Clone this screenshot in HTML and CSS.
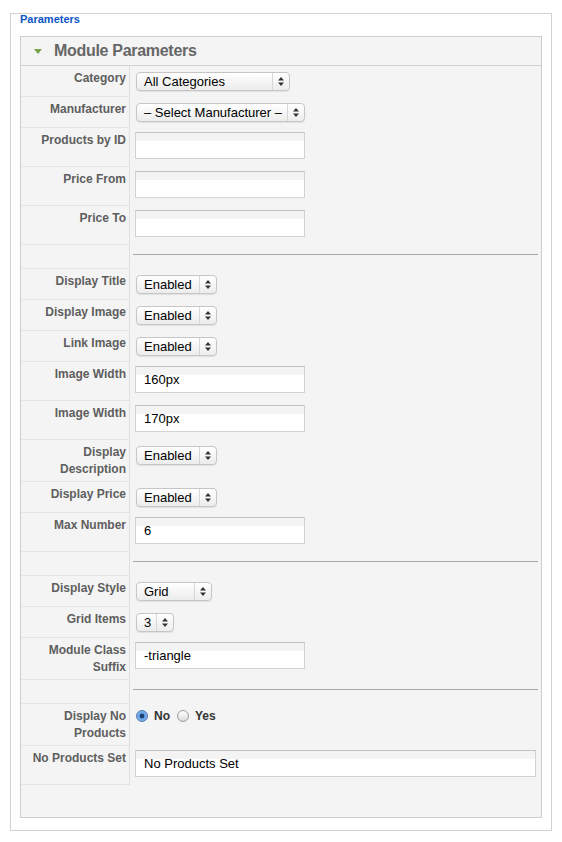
FILE: index.html
```html
<!DOCTYPE html>
<html lang="en">
<head>
    <meta charset="UTF-8">
    <meta name="viewport" content="width=device-width, initial-scale=1.0">
    <title>Module Parameters</title>
    <link rel="stylesheet" href="styles.css">
</head>
<body>
    <div class="page">
        <div class="params">
            <div class="params-title">Parameters</div>
            <div class="panel">
                <h3 class="panel-head"><span class="toggle"></span>Module Parameters</h3>
                <table class="paramlist">
                    <tr>
                        <td class="key">Category</td>
                        <td class="val">
                            <span class="select sel-cat"><span class="sel-val">All Categories</span><span class="sel-arrow"><svg width="6" height="9" viewBox="0 0 6 9"><path d="M3 0 L6 3.5 H0 Z M3 9 L0 5.5 H6 Z" fill="#333"/></svg></span></span>
                        </td>
                    </tr>
                    <tr>
                        <td class="key">Manufacturer</td>
                        <td class="val">
                            <span class="select sel-man"><span class="sel-val">– Select Manufacturer –</span><span class="sel-arrow"><svg width="6" height="9" viewBox="0 0 6 9"><path d="M3 0 L6 3.5 H0 Z M3 9 L0 5.5 H6 Z" fill="#333"/></svg></span></span>
                        </td>
                    </tr>
                    <tr>
                        <td class="key">Products by ID</td>
                        <td class="val"><input type="text" class="text" value=""></td>
                    </tr>
                    <tr>
                        <td class="key">Price From</td>
                        <td class="val"><input type="text" class="text" value=""></td>
                    </tr>
                    <tr>
                        <td class="key">Price To</td>
                        <td class="val"><input type="text" class="text" value=""></td>
                    </tr>
                    <tr class="sep">
                        <td class="key"></td>
                        <td class="val"><hr></td>
                    </tr>
                    <tr>
                        <td class="key">Display Title</td>
                        <td class="val">
                            <span class="select sel-en"><span class="sel-val">Enabled</span><span class="sel-arrow"><svg width="6" height="9" viewBox="0 0 6 9"><path d="M3 0 L6 3.5 H0 Z M3 9 L0 5.5 H6 Z" fill="#333"/></svg></span></span>
                        </td>
                    </tr>
                    <tr>
                        <td class="key">Display Image</td>
                        <td class="val">
                            <span class="select sel-en"><span class="sel-val">Enabled</span><span class="sel-arrow"><svg width="6" height="9" viewBox="0 0 6 9"><path d="M3 0 L6 3.5 H0 Z M3 9 L0 5.5 H6 Z" fill="#333"/></svg></span></span>
                        </td>
                    </tr>
                    <tr>
                        <td class="key">Link Image</td>
                        <td class="val">
                            <span class="select sel-en"><span class="sel-val">Enabled</span><span class="sel-arrow"><svg width="6" height="9" viewBox="0 0 6 9"><path d="M3 0 L6 3.5 H0 Z M3 9 L0 5.5 H6 Z" fill="#333"/></svg></span></span>
                        </td>
                    </tr>
                    <tr>
                        <td class="key">Image Width</td>
                        <td class="val"><input type="text" class="text" value="160px"></td>
                    </tr>
                    <tr>
                        <td class="key">Image Width</td>
                        <td class="val"><input type="text" class="text" value="170px"></td>
                    </tr>
                    <tr>
                        <td class="key">Display Description</td>
                        <td class="val">
                            <span class="select sel-en"><span class="sel-val">Enabled</span><span class="sel-arrow"><svg width="6" height="9" viewBox="0 0 6 9"><path d="M3 0 L6 3.5 H0 Z M3 9 L0 5.5 H6 Z" fill="#333"/></svg></span></span>
                        </td>
                    </tr>
                    <tr>
                        <td class="key">Display Price</td>
                        <td class="val">
                            <span class="select sel-en"><span class="sel-val">Enabled</span><span class="sel-arrow"><svg width="6" height="9" viewBox="0 0 6 9"><path d="M3 0 L6 3.5 H0 Z M3 9 L0 5.5 H6 Z" fill="#333"/></svg></span></span>
                        </td>
                    </tr>
                    <tr>
                        <td class="key">Max Number</td>
                        <td class="val"><input type="text" class="text" value="6"></td>
                    </tr>
                    <tr class="sep">
                        <td class="key"></td>
                        <td class="val"><hr></td>
                    </tr>
                    <tr>
                        <td class="key">Display Style</td>
                        <td class="val">
                            <span class="select sel-grid"><span class="sel-val">Grid</span><span class="sel-arrow"><svg width="6" height="9" viewBox="0 0 6 9"><path d="M3 0 L6 3.5 H0 Z M3 9 L0 5.5 H6 Z" fill="#333"/></svg></span></span>
                        </td>
                    </tr>
                    <tr>
                        <td class="key">Grid Items</td>
                        <td class="val">
                            <span class="select sel-num"><span class="sel-val">3</span><span class="sel-arrow"><svg width="6" height="9" viewBox="0 0 6 9"><path d="M3 0 L6 3.5 H0 Z M3 9 L0 5.5 H6 Z" fill="#333"/></svg></span></span>
                        </td>
                    </tr>
                    <tr>
                        <td class="key">Module Class Suffix</td>
                        <td class="val"><input type="text" class="text" value="-triangle"></td>
                    </tr>
                    <tr class="sep">
                        <td class="key"></td>
                        <td class="val"><hr></td>
                    </tr>
                    <tr>
                        <td class="key">Display No Products</td>
                        <td class="val">
                            <div class="radios">
                                <label class="radio-opt"><input type="radio" name="noprod" checked>No</label>
                                <label class="radio-opt"><input type="radio" name="noprod">Yes</label>
                            </div>
                        </td>
                    </tr>
                    <tr>
                        <td class="key">No Products Set</td>
                        <td class="val"><input type="text" class="text text-full" value="No Products Set"></td>
                    </tr>
                </table>
            </div>
        </div>
    </div>
</body>
</html>
```
FILE: styles.css
```css
body {
    margin: 0;
    background: #fff;
    font-family: "Liberation Sans", Arial, sans-serif;
}
.page {
    padding: 13px 10px 0 10px;
}
.params {
    border: 1px solid #d2d2d2;
    padding: 0 9px 12px 9px;
    background: #fff;
}
.params-title {
    margin: -1px 0 11px 0;
    font-size: 11px;
    line-height: 12px;
    font-weight: bold;
    color: #0b55c4;
}
.panel {
    border: 1px solid #cdcdcd;
    background: #f4f4f4;
    padding-bottom: 32px;
}
.panel-head {
    display: flex;
    align-items: center;
    margin: 0;
    height: 28px;
    padding-left: 13px;
    border-bottom: 1px solid #d0d0d0;
    font-size: 16px;
    letter-spacing: -0.3px;
    font-weight: bold;
    color: #666;
}
.toggle {
    width: 0;
    height: 0;
    border-left: 4px solid transparent;
    border-right: 4px solid transparent;
    border-top: 5px solid #76a34c;
    margin-right: 12px;
}
.paramlist {
    width: 100%;
    border-collapse: separate;
    border-spacing: 0;
}
.paramlist td {
    vertical-align: top;
}
.key {
    width: 105px;
    padding: 4px 3px 3px 0;
    text-align: right;
    font-size: 12px;
    line-height: 17px;
    font-weight: bold;
    color: #5e5e5e;
    border-bottom: 1px solid #e4e4e4;
    border-right: 1px solid #e0e0e0;
}
.val {
    padding: 4px 5px;
}
.text {
    display: block;
    box-sizing: border-box;
    width: 170px;
    height: 27px;
    margin: 0 0 4px 0;
    padding: 0 8px;
    border: 1px solid #d2d2d2;
    border-top-color: #c2c2c2;
    background: linear-gradient(#f3f3f3 0, #f3f3f3 7px, #e9e9e9 7px, #fff 8px, #fff 100%);
    font-family: "Liberation Sans", Arial, sans-serif;
    font-size: 13px;
    color: #000;
    outline: none;
}
.text-full {
    width: 100%;
}
.select {
    display: flex;
    align-items: center;
    box-sizing: border-box;
    height: 19px;
    margin: 2px 0 2px 1px;
    border: 1px solid #c6c6c6;
    border-radius: 4px;
    background: linear-gradient(#fff, #ececec);
    box-shadow: 0 1px 1px rgba(0, 0, 0, 0.08);
    font-size: 13px;
    color: #000;
}
.sel-val {
    flex: 1;
    padding-left: 7px;
    white-space: nowrap;
    overflow: hidden;
    line-height: 17px;
}
.sel-arrow {
    display: flex;
    align-items: center;
    justify-content: center;
    width: 16px;
    height: 100%;
    border-left: 1px solid #d6d6d6;
}
.sel-cat {
    width: 154px;
}
.sel-man {
    width: 169px;
}
.sel-en {
    width: 81px;
}
.sel-grid {
    width: 76px;
}
.sel-num {
    width: 38px;
}
hr {
    height: 0;
    margin: 5px -2px 10px -2px;
    border: 0;
    border-top: 1px solid #a9a9a9;
}
.radios {
    display: flex;
    gap: 6px;
    line-height: 17px;
    font-size: 12px;
    font-weight: bold;
    color: #333;
}
.radio-opt {
    display: inline-flex;
    align-items: center;
    gap: 6px;
}
.radio-opt input {
    appearance: none;
    -webkit-appearance: none;
    box-sizing: border-box;
    width: 12px;
    height: 12px;
    margin: 0 0 1px 1px;
    border: 1px solid #9a9a9a;
    border-radius: 50%;
    background: linear-gradient(#fff, #dcdcdc);
}
.radio-opt input:checked {
    border-color: #4f76ad;
    background: radial-gradient(circle, #1f3d6e 0, #1f3d6e 2px, #5c9ae4 2.6px, #a9cdf3 100%);
}
```
